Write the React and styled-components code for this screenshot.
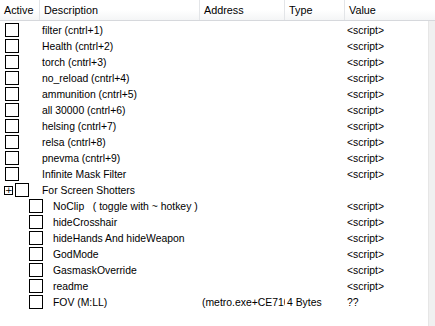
import styled, { createGlobalStyle } from "styled-components";

const GlobalStyle = createGlobalStyle`
  html, body {
    margin: 0;
    padding: 0;
    background: #ffffff;
  }
  body {
    font-family: "Liberation Sans", Arial, sans-serif;
    font-size: 10.4px;
    color: #000000;
  }
`;

const entries = [
  { desc: "filter (cntrl+1)", value: "<script>" },
  { desc: "Health (cntrl+2)", value: "<script>" },
  { desc: "torch (cntrl+3)", value: "<script>" },
  { desc: "no_reload (cntrl+4)", value: "<script>" },
  { desc: "ammunition (cntrl+5)", value: "<script>" },
  { desc: "all 30000 (cntrl+6)", value: "<script>" },
  { desc: "helsing (cntrl+7)", value: "<script>" },
  { desc: "relsa (cntrl+8)", value: "<script>" },
  { desc: "pnevma (cntrl+9)", value: "<script>" },
  { desc: "Infinite Mask Filter", value: "<script>" },
  { desc: "For Screen Shotters", group: true },
  { desc: "NoClip   ( toggle with ~ hotkey )", value: "<script>", level: 1 },
  { desc: "hideCrosshair", value: "<script>", level: 1 },
  { desc: "hideHands And hideWeapon", value: "<script>", level: 1 },
  { desc: "GodMode", value: "<script>", level: 1 },
  { desc: "GasmaskOverride", value: "<script>", level: 1 },
  { desc: "readme", value: "<script>", level: 1 },
  {
    desc: "FOV (M:LL)",
    address: "(metro.exe+CE7104C8)",
    type: "4 Bytes",
    value: "??",
    level: 1,
  },
];

const App = () => {
  return (
    <>
      <GlobalStyle />
      <Window>
        <Header>
          <HeadCell $w={40}>Active</HeadCell>
          <HeadCell $w={160}>Description</HeadCell>
          <HeadCell $w={85}>Address</HeadCell>
          <HeadCell $w={60}>Type</HeadCell>
          <HeadCell $last>Value</HeadCell>
        </Header>
        <Body>
          <List>
            {entries.map((e, i) => (
              <Row key={i}>
                <TreeCell>
                  {e.group && <Expander>+</Expander>}
                  <Check $level={e.level || 0} />
                  <Desc $level={e.level || 0} $group={e.group}>
                    {e.desc}
                  </Desc>
                </TreeCell>
                <Cell $w={85}>{e.address}</Cell>
                <Cell $w={60}>{e.type}</Cell>
                <Cell $last>{e.value}</Cell>
              </Row>
            ))}
          </List>
          <Scroll />
        </Body>
      </Window>
    </>
  );
};
export default App;

const Window = styled.div`
  width: 435px;
  height: 326px;
  overflow: hidden;
  display: flex;
  flex-direction: column;
`;

const Header = styled.div`
  display: flex;
  height: 20px;
  background: linear-gradient(#ffffff, #ffffff 50%, #f4f5f6);
  border-bottom: 1px solid #d6d8dc;
  font-size: 10.8px;
`;

const HeadCell = styled.div`
  flex: ${(p) => (p.$last ? "1" : `0 0 ${p.$w}px`)};
  box-sizing: border-box;
  padding-left: 4px;
  line-height: 21px;
  white-space: nowrap;
  overflow: hidden;
  border-right: ${(p) => (p.$last ? "none" : "1px solid #e3e5e8")};
`;

const Body = styled.div`
  flex: 1;
  display: flex;
`;

const List = styled.div`
  flex: 1;
  padding-top: 1px;
`;

const Scroll = styled.div`
  width: 6px;
  background: #f0f0f0;
  border-left: 1px solid #e6e6e6;
`;

const Row = styled.div`
  display: flex;
  height: 16px;
  align-items: center;
`;

const TreeCell = styled.div`
  flex: 0 0 200px;
  display: flex;
  align-items: center;
  padding-left: 5px;
  box-sizing: border-box;
  overflow: hidden;
  white-space: nowrap;
`;

const Expander = styled.div`
  width: 9px;
  height: 9px;
  box-sizing: border-box;
  border: 1px solid #000;
  margin-left: -1px;
  margin-right: 2px;
  font-size: 9px;
  line-height: 6px;
  text-align: center;
  font-family: "DejaVu Sans", sans-serif;
`;

const Check = styled.div`
  width: 14px;
  height: 14px;
  box-sizing: border-box;
  border: 1px solid #000;
  background: #fff;
  margin-left: ${(p) => (p.$level ? 24 : 0)}px;
`;

const Desc = styled.div`
  margin-left: ${(p) => (p.$level ? 10 : p.$group ? 13 : 23)}px;
  line-height: 17px;
  white-space: pre;
`;

const Cell = styled.div`
  flex: ${(p) => (p.$last ? "1" : `0 0 ${p.$w}px`)};
  box-sizing: border-box;
  padding-left: 2px;
  line-height: 17px;
  white-space: nowrap;
  overflow: hidden;
`;
